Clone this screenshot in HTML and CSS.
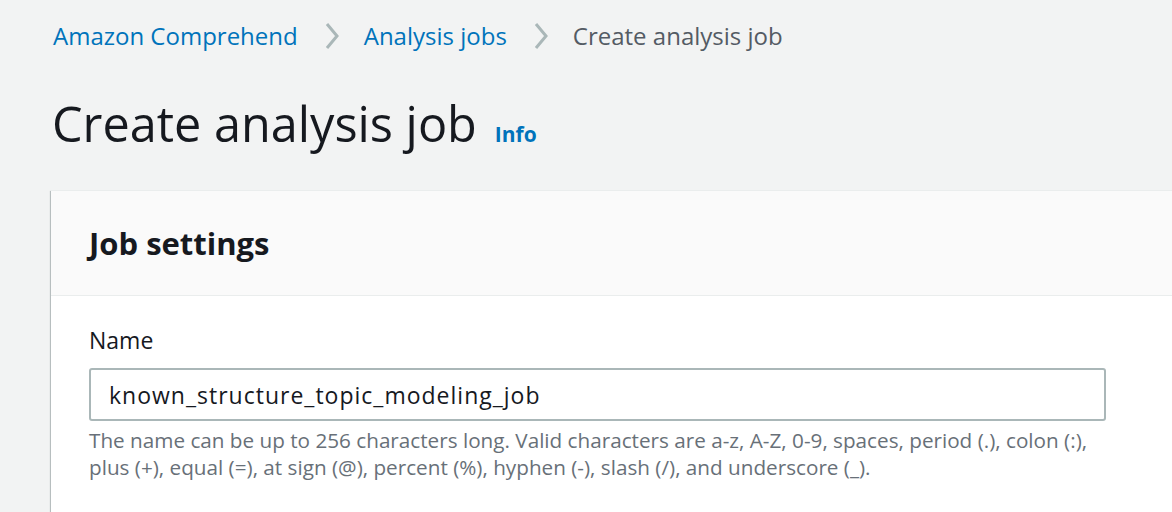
FILE: index.html
```html
<!DOCTYPE html>
<html lang="en">
<head>
<meta charset="utf-8">
<title>Create analysis job</title>
<link rel="stylesheet" href="styles.css">
</head>
<body>
<div class="page">
  <nav class="breadcrumbs">
    <a class="crumb link" href="#">Amazon Comprehend</a>
    <svg class="chev" viewBox="0 0 16 28" width="16" height="28"><path d="M3 2 L13 14 L3 26" fill="none" stroke="#aab7b8" stroke-width="3"/></svg>
    <a class="crumb link" href="#">Analysis jobs</a>
    <svg class="chev" viewBox="0 0 16 28" width="16" height="28"><path d="M3 2 L13 14 L3 26" fill="none" stroke="#aab7b8" stroke-width="3"/></svg>
    <span class="crumb current">Create analysis job</span>
  </nav>
  <div class="title-row">
    <h1 class="title">Create analysis job</h1>
    <a class="info" href="#">Info</a>
  </div>
  <section class="panel">
    <div class="panel-header">
      <h2 class="panel-title">Job settings</h2>
    </div>
    <div class="panel-body">
      <label class="label" for="jobname">Name</label>
      <div class="input" id="jobname">known_structure_topic_modeling_job</div>
      <p class="help">The name can be up to 256 characters long. Valid characters are a-z, A-Z, 0-9, spaces, period (.), colon (:), plus (+), equal (=), at sign (@), percent (%), hyphen (-), slash (/), and underscore (_).</p>
    </div>
  </section>
</div>
</body>
</html>
```

FILE: styles.css
```css
* { box-sizing: border-box; }
html, body {
  margin: 0;
  padding: 0;
  background: #f2f3f3;
  font-family: "Open Sans", "Noto Sans", sans-serif;
  color: #16191f;
  overflow: hidden;
}
.page {
  padding: 0 0 0 51px;
  width: 1172px;
  height: 512px;
}
.breadcrumbs {
  display: flex;
  align-items: center;
  height: 72px;
  padding-left: 2px;
}
.crumb {
  font-size: 24px;
  text-decoration: none;
  line-height: 1;
}
.link { color: #0073bb; }
.current { color: #545b64; }
.chev {
  margin: 0 24px 0 26px;
  flex: none;
}
.title-row {
  display: flex;
  align-items: baseline;
  gap: 18px;
  height: 118px;
  padding-top: 22px;
  padding-left: 1px;
}
.title {
  margin: 0;
  font-size: 48.6px;
  font-weight: 400;
  line-height: 1.2;
}
.info {
  color: #0073bb;
  font-weight: 700;
  font-size: 21px;
  text-decoration: none;
}
.panel {
  background: #fff;
  box-shadow: 0 1px 1px 0 rgba(0,28,36,.3), -1px 1px 1px 0 rgba(0,28,36,.2), 1px 1px 1px 0 rgba(0,28,36,.2);
  border-top: 1px solid #eaeded;
  height: 340px;
}
.panel-header {
  background: #fafafa;
  border-bottom: 1px solid #eaeded;
  height: 105px;
  display: flex;
  align-items: center;
  padding-left: 38px;
}
.panel-title {
  margin: 0;
  font-size: 31px;
  font-weight: 700;
  line-height: 1;
}
.panel-body {
  padding: 29px 0 0 38px;
}
.label {
  display: block;
  font-size: 23px;
  line-height: 30px;
  color: #16191f;
}
.input {
  margin-top: 13px;
  width: 1017px;
  height: 53px;
  border: 2px solid #aab7b8;
  border-radius: 3px;
  background: #fff;
  font-size: 23px;
  letter-spacing: 1px;
  display: flex;
  align-items: center;
  padding-left: 18px;
  color: #16191f;
}
.help {
  margin: 6px 0 0 0;
  width: 1020px;
  font-size: 20.7px;
  line-height: 27px;
  color: #687078;
}
```
